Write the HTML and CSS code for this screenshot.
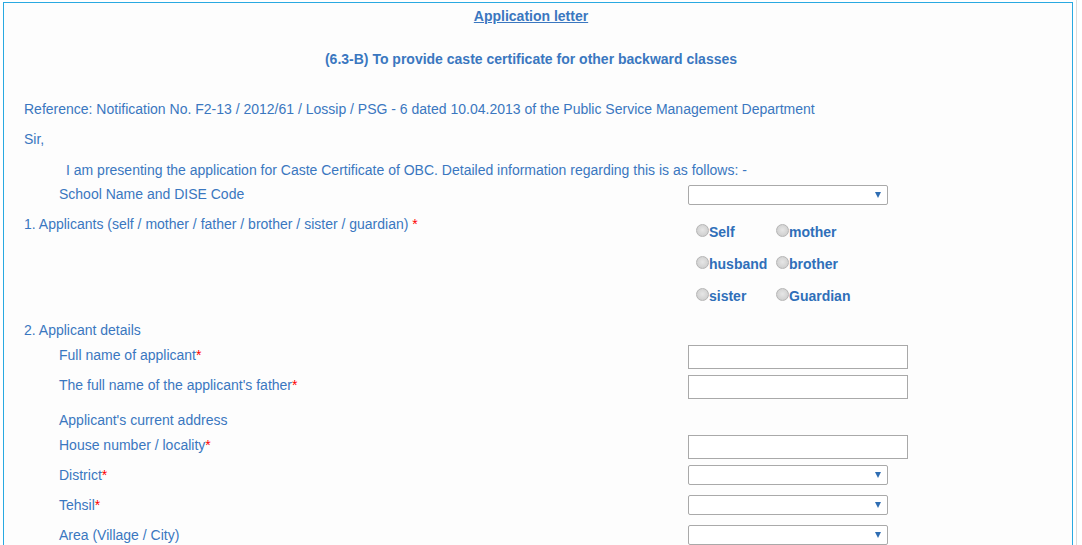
FILE: index.html
```html
<!DOCTYPE html>
<html>
<head>
<meta charset="utf-8">
<link rel="stylesheet" href="styles.css">
</head>
<body>
<div class="page">
  <div class="box">
    <div class="title"><span class="u">Application letter</span></div>
    <div class="subtitle">(6.3-B) To provide caste certificate for other backward classes</div>
    <p class="ref">Reference: Notification No. F2-13 / 2012/61 / Lossip / PSG - 6 dated 10.04.2013 of the Public Service Management Department</p>
    <p class="sir">Sir,</p>
    <p class="intro">I am presenting the application for Caste Certificate of OBC. Detailed information regarding this is as follows: -</p>

    <div class="form">
      <div class="row r-school">
        <div class="label ind">School Name and DISE Code</div>
        <div class="field"><span class="sel"><select></select></span></div>
      </div>

      <div class="row r-app">
        <div class="label">1. Applicants (self / mother / father / brother / sister / guardian) <span class="req">*</span></div>
        <div class="field">
          <div class="radios">
            <label class="opt"><input type="radio" name="ap">Self</label>
            <label class="opt"><input type="radio" name="ap">mother</label>
            <label class="opt"><input type="radio" name="ap">husband</label>
            <label class="opt"><input type="radio" name="ap">brother</label>
            <label class="opt"><input type="radio" name="ap">sister</label>
            <label class="opt"><input type="radio" name="ap">Guardian</label>
          </div>
        </div>
      </div>

      <div class="row r-sec">
        <div class="label">2. Applicant details</div>
      </div>

      <div class="row r30">
        <div class="label ind">Full name of applicant<span class="req">*</span></div>
        <div class="field"><input type="text" class="txt"></div>
      </div>

      <div class="row r35">
        <div class="label ind">The full name of the applicant's father<span class="req">*</span></div>
        <div class="field"><input type="text" class="txt"></div>
      </div>

      <div class="row r-sec">
        <div class="label ind">Applicant's current address</div>
      </div>

      <div class="row r30">
        <div class="label ind">House number / locality<span class="req">*</span></div>
        <div class="field"><input type="text" class="txt"></div>
      </div>

      <div class="row r30">
        <div class="label ind">District<span class="req">*</span></div>
        <div class="field"><span class="sel"><select></select></span></div>
      </div>

      <div class="row r30">
        <div class="label ind">Tehsil<span class="req">*</span></div>
        <div class="field"><span class="sel"><select></select></span></div>
      </div>

      <div class="row r30">
        <div class="label ind">Area (Village / City)</div>
        <div class="field"><span class="sel"><select></select></span></div>
      </div>
    </div>
  </div>
</div>
</body>
</html>
```

FILE: styles.css
```css
html, body {
  margin: 0;
  padding: 0;
  background: #ffffff;
  overflow: hidden;
}

body {
  font-family: "Liberation Sans", Arial, Helvetica, sans-serif;
  font-size: 14px;
  line-height: 20px;
  color: #3a77c0;
}

.page {
  width: 1076px;
  border-right: 1px solid #dcdcdc;
  min-height: 545px;
  padding-top: 2px;
}

.box {
  margin-left: 3px;
  width: 1014px;
  border: 1px solid #29a9e1;
  padding: 3px 34px 60px 20px;
  background: #fdfdfd;
}

.title {
  text-align: center;
  font-weight: bold;
}

.title .u {
  text-decoration: underline;
}

.subtitle {
  margin-top: 23px;
  text-align: center;
  font-weight: bold;
}

.ref {
  margin: 30px 0 0;
}

.sir {
  margin: 10px 0 0;
}

.intro {
  margin: 11px 0 0;
  padding-left: 42px;
}

.form {
  margin-top: 4px;
}

.row {
  display: flex;
  align-items: flex-start;
}

.label {
  width: 664px;
  flex: none;
}

.label.ind {
  padding-left: 35px;
  box-sizing: border-box;
}

.field {
  flex: 1;
}

.req {
  color: #ff0000;
}

.r-school {
  height: 30px;
}

.r-school .field {
  padding-top: 1px;
}

.r-app {
  height: 106px;
}

.r-sec {
  height: 25px;
}

.r30 {
  height: 30px;
}

.r35 {
  height: 35px;
}

.sel {
  position: relative;
  display: inline-block;
  width: 200px;
  height: 20px;
  vertical-align: top;
}

.sel select {
  appearance: none;
  -webkit-appearance: none;
  width: 200px;
  height: 20px;
  margin: 0;
  border: 1px solid #a9a9a9;
  border-radius: 2px;
  background: #ffffff;
  display: block;
  box-sizing: border-box;
}

.sel::after {
  content: "";
  position: absolute;
  right: 7px;
  top: 7px;
  border-left: 3.5px solid transparent;
  border-right: 3.5px solid transparent;
  border-top: 6px solid #2f6db3;
}

.txt {
  width: 220px;
  height: 24px;
  margin: 0;
  border: 1px solid #a9a9a9;
  background: #ffffff;
  box-sizing: border-box;
  display: block;
}

.radios {
  margin-top: 1px;
  padding-left: 8px;
  display: grid;
  grid-template-columns: 80px 80px;
  grid-auto-rows: 32px;
}

.opt {
  display: flex;
  align-items: center;
  font-weight: bold;
  color: #2f6fb9;
  padding-top: 2px;
  white-space: nowrap;
}

.opt input {
  appearance: none;
  -webkit-appearance: none;
  width: 13px;
  height: 13px;
  margin: 0 0 3px 0;
  border: 1px solid #b5b5b5;
  border-radius: 50%;
  background: radial-gradient(circle at 50% 45%, #e6e6e6 0%, #d4d4d4 60%, #c4c4c4 100%);
  box-sizing: border-box;
  flex: none;
}
```
